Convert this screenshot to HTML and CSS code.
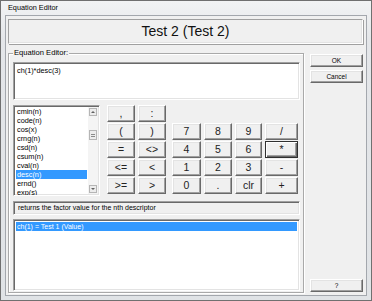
FILE: index.html
```html
<!DOCTYPE html>
<html>
	<head>
		<meta charset="UTF-8">
		<title>Equation Editor</title>
		<link rel="stylesheet" href="styles.css">
	</head>
	<body>
		<div class="window">
			<div class="titlebar">Equation Editor</div>
			<div class="client">
				<div class="header">Test 2 (Test 2)</div>
				<div class="main">
					<div class="group">
						<span class="group-label">Equation Editor:</span>
						<div class="formula">ch(1)*desc(3)</div>
						<div class="middle">
							<div class="funcs">
								<ul class="func-list">
									<li>cmin(n)</li>
									<li>code(n)</li>
									<li>cos(x)</li>
									<li>crng(n)</li>
									<li>csd(n)</li>
									<li>csum(n)</li>
									<li>cval(n)</li>
									<li class="sel">desc(n)</li>
									<li>ernd()</li>
									<li>exp(s)</li>
								</ul>
								<div class="scrollbar">
									<div class="sb-btn"><i class="arrow-up"></i></div>
									<div class="sb-track"><div class="sb-thumb"></div></div>
									<div class="sb-btn"><i class="arrow-down"></i></div>
								</div>
							</div>
							<div class="keys keys-left">
								<button>,</button><button>:</button>
								<button>(</button><button>)</button>
								<button>=</button><button>&lt;&gt;</button>
								<button>&lt;=</button><button>&lt;</button>
								<button>&gt;=</button><button>&gt;</button>
							</div>
							<div class="keys keys-right">
								<button>7</button><button>8</button><button>9</button><button>/</button>
								<button>4</button><button>5</button><button>6</button><button class="default">*</button>
								<button>1</button><button>2</button><button>3</button><button>-</button>
								<button>0</button><button>.</button><button>clr</button><button>+</button>
							</div>
						</div>
						<div class="desc">returns the factor value for the nth descriptor</div>
						<ul class="vars">
							<li class="sel">ch(1) = Test 1 (Value)</li>
						</ul>
					</div>
					<div class="side">
						<button class="btn">OK</button>
						<button class="btn">Cancel</button>
						<button class="btn help">?</button>
					</div>
				</div>
			</div>
		</div>
	</body>
</html>
```
FILE: styles.css
```css
* {
	margin: 0;
	padding: 0;
	box-sizing: border-box;
}

body {
	background: #fff;
	font-family: "Liberation Sans", Arial, sans-serif;
	font-size: 7.3px;
	color: #000;
}

.window {
	width: 372px;
	height: 301px;
	display: flex;
	flex-direction: column;
	border: 1px solid #707070;
	background: linear-gradient(180deg, #f2f3f4, #e4e6e9 40px, #e0e3e6);
	padding: 0 4px 4px 4px;
}

.titlebar {
	height: 14px;
	line-height: 14px;
	padding-left: 3px;
	color: #000;
}

.client {
	flex: 1;
	display: flex;
	flex-direction: column;
	border: 1px solid #a3a7ad;
	background: #f0f0f0;
	padding: 3px 3px 0 2px;
}

.header {
	height: 25px;
	border: 1px solid #a0a0a0;
	border-right-color: #fff;
	border-bottom-color: #fff;
	box-shadow: inset -1px -1px #e3e3e3, 1px 1px #a0a0a0;
	font-size: 14px;
	line-height: 22px;
	text-align: center;
	color: #111;
}

.main {
	flex: 1;
	display: flex;
	margin-top: 9px;
}

/* group box */
.group {
	width: 296px;
	margin-bottom: 2px;
	border: 1px solid #a9a9a9;
	box-shadow: inset 1px 1px #fff, 1px 1px #fff;
	padding: 0 3px 1px 4px;
	display: flex;
	flex-direction: column;
}

.group-label {
	align-self: flex-start;
	margin: -6px 0 0 0;
	padding: 0 1px;
	line-height: 10px;
	font-size: 7.6px;
	background: #f0f0f0;
}

.formula,
.func-list,
.desc,
.vars {
	border: 1px solid #a0a0a0;
	border-right-color: #fff;
	border-bottom-color: #fff;
	box-shadow: inset 1px 1px #696969, inset -1px -1px #e3e3e3;
}

.formula {
	margin-top: 4px;
	height: 38px;
	background: #fff;
	padding: 3px 3px;
	line-height: 9px;
}

.middle {
	display: flex;
	margin-top: 5px;
	height: 91px;
}

.funcs {
	width: 87px;
	display: flex;
	position: relative;
}

.func-list {
	flex: 1;
	list-style: none;
	background: #fff;
	padding: 1px 12px 0 2px;
	overflow: hidden;
}

.func-list li,
.vars li {
	height: 9px;
	line-height: 9px;
	padding-left: 1px;
}

.sel {
	background: #3399ff;
	color: #fff;
}

.scrollbar {
	position: absolute;
	top: 2px;
	right: 2px;
	bottom: 2px;
	width: 10px;
	display: flex;
	flex-direction: column;
	background: #f4f4f4;
	padding: 1px;
}

.sb-btn,
.sb-thumb {
	height: 8px;
	background: #ececec;
	border: 1px solid #b5b5b5;
	display: flex;
	align-items: center;
	justify-content: center;
}

.sb-track {
	flex: 1;
	padding-top: 14px;
}

.sb-thumb {
	height: 10px;
	background: repeating-linear-gradient(180deg, #ececec 0 1px, #8a8a8a 1px 2px) center / 4px 5px no-repeat, #ececec;
}

.arrow-up,
.arrow-down {
	width: 0;
	height: 0;
	border-left: 2px solid transparent;
	border-right: 2px solid transparent;
}

.arrow-up {
	border-bottom: 2px solid #606060;
}

.arrow-down {
	border-top: 2px solid #606060;
}

/* calculator keys */
.keys {
	display: grid;
	grid-auto-rows: 17px;
	row-gap: 1px;
	column-gap: 3px;
}

.keys-left {
	margin-left: 7px;
	grid-template-columns: 28px 28px;
}

.keys-right {
	margin-left: 6px;
	margin-top: 18px;
	grid-template-columns: 29px 28px 27px 33px;
}

button {
	font-family: "Liberation Sans", Arial, sans-serif;
	color: #000;
	background: #f0f0f0;
	border: 1px solid;
	border-color: #fff #696969 #696969 #fff;
	box-shadow: inset -1px -1px #a0a0a0, inset 1px 1px #e3e3e3;
}

.keys button {
	font-size: 10.5px;
	line-height: 15px;
	color: #222;
}

.keys button.default {
	border: 1px solid #303030;
	box-shadow: inset 1px 1px #fff, inset -1px -1px #696969, inset -2px -2px #a0a0a0;
}

.desc {
	margin-top: 5px;
	height: 14px;
	line-height: 12px;
	padding: 0 4px;
	font-size: 7px;
}

.vars {
	margin-top: 4px;
	flex: 1;
	list-style: none;
	background: #fff;
	padding: 2px 2px;
	font-size: 7px;
}

.side {
	width: 53px;
	margin-left: 6px;
	padding: 1px 0 3px;
	display: flex;
	flex-direction: column;
	gap: 3px;
}

.btn {
	height: 13px;
	font-size: 6.5px;
}

.help {
	margin-top: auto;
}
```
